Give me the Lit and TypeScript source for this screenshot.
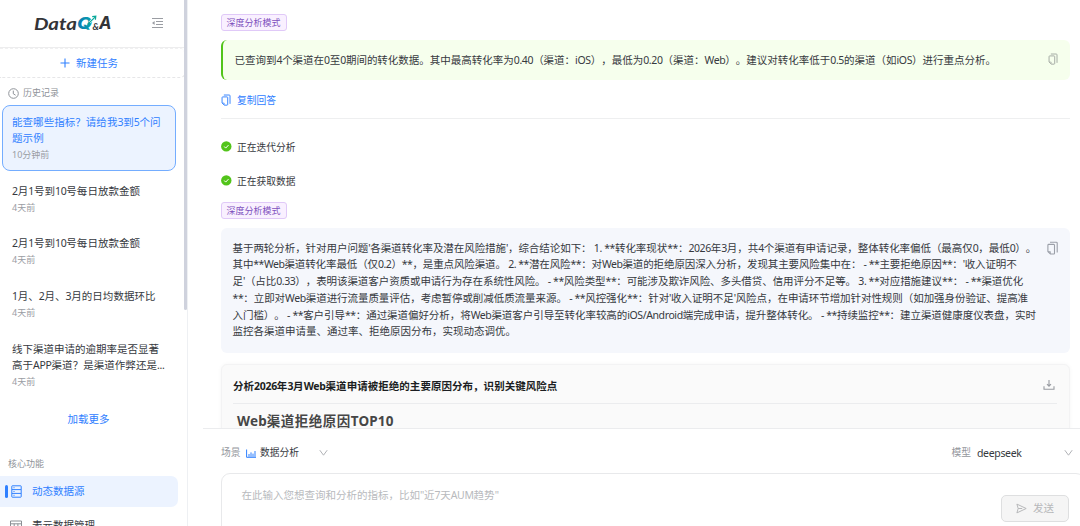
import { LitElement, html, css, svg } from "lit";
import { customElement, property, state } from "lit/decorators.js";

/** A single line of text whose tracking is adjusted to a given measure; Latin runs are set tighter. */
@customElement("fitted-text")
class FittedText extends LitElement {
  @property() text = "";
  @property({ type: Number }) measure = 0;
  @state() private tracking = 0;

  static styles = css`
    :host { display: block; white-space: pre; }
    .line { display: inline-block; }
  `;

  firstUpdated() {
    const line = this.renderRoot.querySelector(".line") as HTMLElement;
    this.tracking = (this.measure - line.getBoundingClientRect().width) / [...this.text].length;
  }

  render() {
    const runs = this.text.match(/[\x20-\x7e]+|[^\x20-\x7e]+/g) ?? [];
    return html`<span class="line">${runs.map((run) => {
      const latin = run.charCodeAt(0) < 0x7f;
      return html`<span style="letter-spacing:${this.tracking - (latin ? 0.35 : 0)}px">${run}</span>`;
    })}</span>`;
  }
}

const copyIcon = svg`<path d="M3 1.2h6.3a.9.9 0 0 1 .9.9v9.4" /><path d="M1.7 3.4h5a.8.8 0 0 1 .8.8v8a.8.8 0 0 1-.8.8H3.6L.9 10.5V4.2a.8.8 0 0 1 .8-.8z" /><path d="M1.2 10.6h2.2v2" stroke-width=".8" />`;

const history = [
  { lines: [["能查哪些指标？请给我3到5个问", 148.5], ["题示例", 31.8]], time: "10分钟前", active: true },
  { lines: [["2月1号到10号每日放款金额", 128]], time: "4天前" },
  { lines: [["2月1号到10号每日放款金额", 128]], time: "4天前" },
  { lines: [["1月、2月、3月的日均数据环比", 143.5]], time: "4天前" },
  { lines: [["线下渠道申请的逾期率是否显著", 147], ["高于APP渠道？是渠道作弊还是...", 152.5]], time: "4天前" },
] as { lines: [string, number][]; time: string; active?: boolean }[];

const summary: [string, number][] = [
  ["基于两轮分析，针对用户问题'各渠道转化率及潜在风险措施'，综合结论如下： 1. **转化率现状**：2026年3月，共4个渠道有申请记录，整体转化率偏低（最高仅0，最低0）。", 803.5],
  ["其中**Web渠道转化率最低（仅0.2）**，是重点风险渠道。 2. **潜在风险**：对Web渠道的拒绝原因深入分析，发现其主要风险集中在： - **主要拒绝原因**：'收入证明不", 784],
  ["足'（占比0.33），表明该渠道客户资质或申请行为存在系统性风险。 - **风险类型**：可能涉及欺诈风险、多头借贷、信用评分不足等。 3. **对应措施建议**： - **渠道优化", 790.5],
  ["**：立即对Web渠道进行流量质量评估，考虑暂停或削减低质流量来源。 - **风控强化**：针对'收入证明不足'风险点，在申请环节增加针对性规则（如加强身份验证、提高准", 795.5],
  ["入门槛）。 - **客户引导**：通过渠道偏好分析，将Web渠道客户引导至转化率较高的iOS/Android端完成申请，提升整体转化。 - **持续监控**：建立渠道健康度仪表盘，实时", 803.3],
  ["监控各渠道申请量、通过率、拒绝原因分布，实现动态调优。", 283.5],
];

@customElement("app-root")
class AppRoot extends LitElement {
  static styles = css`
    :host {
      display: flex; width: 1080px; height: 526px; overflow: hidden; background: #fff;
      font-family: "Noto Sans", "Noto Sans CJK SC", sans-serif;
      font-size: 10.5px; line-height: 16px; color: #36393e; text-spacing-trim: space-all;
    }
    * { box-sizing: border-box; }
    svg { display: block; fill: none; stroke: currentColor; flex: none; }
    .sidebar { position: relative; width: 188px; height: 526px; border-right: 1px solid #eef0f3; flex: none; overflow: hidden; }
    .thumb { position: absolute; right: 0; top: 0; width: 3px; height: 310px; background: #cfd2dd; border-radius: 0 0 2px 2px; }
    .brand { display: flex; height: 48px; border-bottom: 1px solid #ededee; padding: 13px 0 0 33px; }
    .brand .fold { margin: 4px 0 0 38px; color: #9a9da3; }
    .logo { font-family: Lato, sans-serif; font-weight: 700; font-style: italic; stroke: none; }
    .logo .round { font-family: Inter, sans-serif; }
    .new { display: flex; width: 185px; height: 30px; border: 1px dashed #e6e6e8; border-left: 0; border-top-color: #f0f0f1; border-radius: 0 5px 5px 0; align-items: center; padding-left: 60px; gap: 6px; color: #2f80ff; }
    .label { display: flex; align-items: center; gap: 4px; height: 16px; margin: 7px 0 0 8px; font-size: 9px; color: #8f9399; }
    .history { display: flex; flex-direction: column; padding-left: 2px; margin-top: 4px; }
    .item { width: 174px; padding: 7px 9px 8px; border: 1px solid transparent; border-radius: 8px; margin-bottom: 3.7px; }
    .item.active { padding-top: 8px; color: #2f80ff; background: #ecf3ff; border-color: #74adff; height: 66px; }
    .time { font-size: 9px; line-height: 14px; margin-top: 2px; color: #9a9da3; }
    .more { color: #2f80ff; margin: 9.5px 0 0 67.5px; }
    .label.core { margin-top: 29px; }
    .nav { display: flex; align-items: center; height: 31px; width: 178px; margin-top: 4px; padding-left: 5px; border-radius: 0 7px 7px 0; }
    .nav.active { background: #ecf3ff; color: #2f80ff; }
    .bar { width: 2.5px; height: 13px; border-radius: 2px; background: #2f80ff; margin-right: 3.5px; }
    .nav svg { margin-right: 10px; }
    .nav.meta { margin-top: 3px; padding-left: 10px; }
    .nav.meta svg { color: #8c8f95; }
    .main { display: flex; flex-direction: column; flex: 1; padding-left: 15px; min-width: 0; }
    .thread { height: 428px; overflow: hidden; padding: 14px 10px 0 18px; flex: none; }
    .tag { display: flex; align-items: center; width: 66px; height: 17px; padding-left: 4.5px; border: 1px solid #e0c9f8; border-radius: 3px; background: #f9f0ff; color: #7f50bd; font-size: 9px; }
    .answer { display: flex; height: 40px; margin-top: 9px; border-left: 2px solid #52c41a; border-radius: 6px; background: #f6ffed; padding: 12px 12px 0 11.5px; justify-content: space-between; }
    .answer svg { color: #a2a8a2; margin-top: 1px; }
    .copy { display: flex; align-items: center; gap: 6px; height: 16px; margin-top: 12px; color: #2f80ff; font-size: 9.75px; }
    .copy svg { margin-top: -1px; }
    .copy span, .step span { padding-top: 1px; }
    .rule { height: 1px; background: #eeeff0; margin-top: 10px; }
    .step { display: flex; align-items: center; gap: 5px; height: 16px; margin-top: 18px; font-size: 9.75px; }
    .step svg { margin-top: -2px; }
    .step.first { margin-top: 20px; }
    .tag.second { margin-top: 13px; }
    .summary { display: flex; justify-content: space-between; height: 125px; margin-top: 8.5px; padding: 12px 12px 0 11.5px; border-radius: 6px; background: #f5f7fc; line-height: 16.8px; }
    .summary svg { color: #9b9fa8; margin: 1px 0 0 -20px; }
    .chart { height: 90px; margin-top: 11.5px; padding: 13px 12px 0 11px; background: #fafafa; border: 1px solid #f3f3f4; border-radius: 6px; box-shadow: 0 0 4px #0000000a; }
    .chart-head { display: flex; justify-content: space-between; height: 26px; border-bottom: 1px solid #ebecee; font-weight: 700; color: #1c1e22; }
    .chart-head svg { color: #989ba1; margin-right: 2px; }
    .chart-title { font-size: 13.5px; line-height: 18px; font-weight: 700; color: #464646; margin: 7.5px 0 0 4px; }
    .composer { flex: 1; border-top: 1px solid #ebecee; padding-left: 18px; background: #fff; }
    .options { display: flex; align-items: center; height: 16px; margin-top: 16px; font-size: 9.75px; white-space: nowrap; }
    .muted { color: #94979d; }
    .options .chart-icon { color: #2f80ff; margin: 0 4px 0 5.5px; }
    .options .down { color: #b0b2b6; margin-left: 19.5px; }
    .model { margin-left: 624px; }
    .engine { margin-left: 6px; font-size: 10.5px; width: 67px; }
    .input { display: flex; justify-content: space-between; width: 864px; height: 70px; margin-top: 12px; border: 1px solid #e8e9eb; border-radius: 9px; padding: 12.5px 15px 0 19.5px; color: #b8babd; }
    .send { display: flex; align-items: center; justify-content: center; gap: 6px; width: 68px; height: 27px; margin-top: 8px; border: 1px solid #dedfe0; border-radius: 5px; background: #f5f5f5; color: #b7b8ba; }
  `;

  private copyGlyph(w = 11, h = 13) {
    return html`<svg width=${w} height=${h} viewBox="0 0 11 14" stroke-width="1.1" stroke-linejoin="round">${copyIcon}</svg>`;
  }

  private downGlyph() {
    return html`<svg class="down" width="9" height="8" viewBox="0 0 9 8"><path d="M.8 1.2 4.5 6.2 8.2 1.2" /></svg>`;
  }

  private step(text: string, first = false) {
    return html`<div class="step ${first ? "first" : ""}">
      <svg width="11" height="11" viewBox="0 0 11 11"><circle cx="5.3" cy="5.4" r="5.2" fill="#52c41a" stroke="none" /><path d="M3.2 5.5l1.5 1.6 2.8-3" stroke="#fff" stroke-width="1" /></svg>
      <span>${text}</span>
    </div>`;
  }

  render() {
    return html`
      <aside class="sidebar">
        <header class="brand">
          <svg class="logo" width="80" height="22" viewBox="0 0 80 22">
            <defs><linearGradient id="q" x1="0" y1="0" x2="1" y2="0"><stop offset="0" stop-color="#0878b5" /><stop offset="1" stop-color="#09a5ab" /></linearGradient></defs>
            <text x="1" y="16.5" font-size="17.6" textLength="43" lengthAdjust="spacingAndGlyphs" fill="#333438">Data</text>
            <text class="round" x="44" y="16.3" font-size="16.5" font-weight="800" textLength="15" lengthAdjust="spacingAndGlyphs" fill="url(#q)">Q</text>
            <path d="M56.5 9.5l5.8-5.6M59.2 3.6l3.8-.7-.5 3.7" stroke="#fff" stroke-width="2.4" fill="none" />
            <path d="M54.5 11.5l7.8-7.6M59.2 3.6l3.6-.5-.4 3.6" stroke="#0aa99b" stroke-width="1.2" fill="none" />
            <text x="59.6" y="16.5" font-size="9.5" fill="#333438">&amp;</text>
            <text class="round" x="66" y="16.3" font-size="17" font-weight="700" textLength="12.5" lengthAdjust="spacingAndGlyphs" fill="#333438">A</text>
          </svg>
          <svg class="fold" width="13" height="12" viewBox="0 0 13 12"><path d="M1 1.5h11M5 4.5h7M5 7.5h7M1 10.5h11" /><path d="M3.6 4v4L1 6z" fill="currentColor" stroke="none" /></svg>
        </header>
        <div class="new">
          <svg width="10" height="10" viewBox="0 0 10 10" stroke-width="1.1"><path d="M5 .5v9M.5 5h9" /></svg>
          <span>新建任务</span>
        </div>
        <div class="label">
          <svg width="11" height="11" viewBox="0 0 11 11"><circle cx="5.5" cy="5.5" r="4.8" /><path d="M5.3 2.6v3.2l2.3 1.4" /></svg>
          <span>历史记录</span>
        </div>
        <div class="history">
          ${history.map((h) => html`<div class="item ${h.active ? "active" : ""}">
            ${h.lines.map(([t, w]) => html`<fitted-text .text=${t} .measure=${w}></fitted-text>`)}
            <div class="time">${h.time}</div>
          </div>`)}
        </div>
        <div class="more">加载更多</div>
        <div class="label core">核心功能</div>
        <div class="nav active">
          <i class="bar"></i>
          <svg width="11" height="13" viewBox="0 0 11 13"><rect x=".8" y=".8" width="9.4" height="11.4" rx=".5" /><path d="M1 4.6h9M1 8.4h9M2.5 2.7h1M2.5 6.5h1M2.5 10.3h1" /></svg>
          <span>动态数据源</span>
        </div>
        <div class="nav meta">
          <svg width="12" height="11" viewBox="0 0 12 11"><path d="M.5 1h11v9.4H.5zM.5 3.8h11M.5 7h11M4.2 3.8v6.6M7.9 3.8v6.6" /></svg>
          <span>表元数据管理</span>
        </div>
        <i class="thumb"></i>
      </aside>
      <main class="main">
        <section class="thread">
          <div class="tag">深度分析模式</div>
          <div class="answer">
            <fitted-text .text=${"已查询到4个渠道在0至0期间的转化数据。其中最高转化率为0.40（渠道：iOS），最低为0.20（渠道：Web）。建议对转化率低于0.5的渠道（如iOS）进行重点分析。"} .measure=${761.3}></fitted-text>
            ${this.copyGlyph(10, 12)}
          </div>
          <div class="copy">${this.copyGlyph(10, 12)}<span>复制回答</span></div>
          <div class="rule"></div>
          ${this.step("正在迭代分析", true)}
          ${this.step("正在获取数据")}
          <div class="tag second">深度分析模式</div>
          <div class="summary">
            <div>${summary.map(([t, w]) => html`<fitted-text .text=${t} .measure=${w}></fitted-text>`)}</div>
            ${this.copyGlyph(11, 14)}
          </div>
          <div class="chart">
            <div class="chart-head">
              <fitted-text .text=${"分析2026年3月Web渠道申请被拒绝的主要原因分布，识别关键风险点"} .measure=${324.3}></fitted-text>
              <svg width="12" height="13" viewBox="0 0 12 13" stroke-width="1.1"><path d="M1 8.3v3h10v-3M6 2v6M4 6.2l2 2 2-2" /></svg>
            </div>
            <div class="chart-title"><fitted-text .text=${"Web渠道拒绝原因TOP10"} .measure=${156.5}></fitted-text></div>
          </div>
        </section>
        <section class="composer">
          <div class="options">
            <span class="muted">场景</span>
            <svg class="chart-icon" width="10" height="9" viewBox="0 0 10 9"><path d="M.6.5v7.8H10M3 7.8V5M5 7.8V3.4M7 7.8V4.6M9 7.8V2" /></svg>
            <span>数据分析</span>${this.downGlyph()}
            <span class="model muted">模型</span>
            <fitted-text class="engine" .text=${"deepseek"} .measure=${44.5}></fitted-text>${this.downGlyph()}
          </div>
          <div class="input">
            <fitted-text .text=${"在此输入您想查询和分析的指标，比如\"近7天AUM趋势\""} .measure=${257}></fitted-text>
            <div class="send">
              <svg width="11" height="11" viewBox="0 0 11 11"><path d="M.9 1.1 10.2 5.5.9 9.9 2.2 5.5zM2.2 5.5h4" /></svg>
              <span>发送</span>
            </div>
          </div>
        </section>
      </main>
    `;
  }
}
